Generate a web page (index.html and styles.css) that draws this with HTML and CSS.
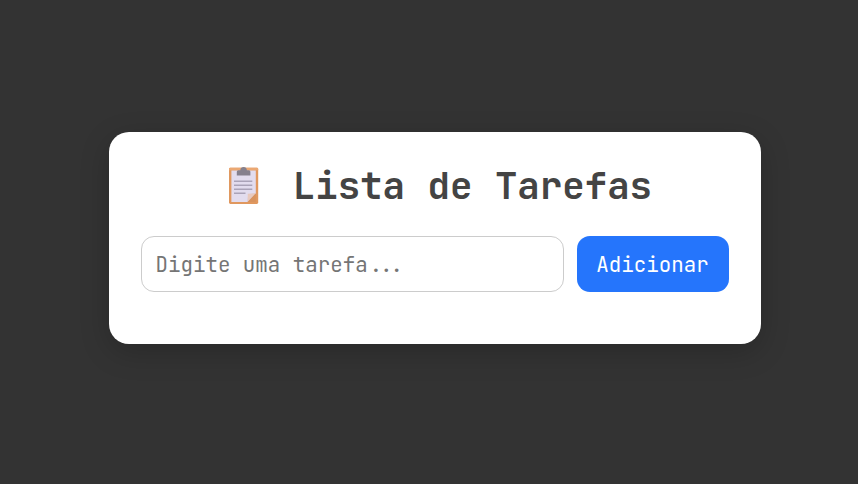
FILE: index.html
```html
<!DOCTYPE html>
<html lang="pt-BR">
<head>
<meta charset="UTF-8">
<title>Lista de Tarefas</title>
<link rel="stylesheet" href="styles.css">
</head>
<body>
<main class="card">
  <h1 class="title">
    <svg class="clipboard" viewBox="0 0 30 38" aria-hidden="true">
      <rect x="0" y="1.7" width="29.2" height="36.2" rx="1.4" fill="#e0985f"/>
      <path d="M1.2 1.7H28q1.2 0 1.2 1.2v1.3H0V2.9q0-1.2 1.2-1.2z" fill="#eba873"/>
      <path d="M2.4 4.6h24.4v22.6L18.6 36H2.4z" fill="#e2dcee"/>
      <path d="M18.6 36l.6-7.7 7.6-1.1z" fill="#cdbfd0"/>
      <path d="M18.6 36l.2-8.2 8-.6z" fill="#e8c9bd"/>
      <path d="M26.8 27.2V36h-8.2z" fill="#d8935e"/>
      <path d="M7.8 9.5V5.8q0-1.5 1.5-1.5h2Q11.7 1 14.6 1t3.3 3.3h2q1.5 0 1.5 1.5v3.7z" fill="#85808d"/>
      <path d="M5 15.2h18.3M5 19.2h18.3M5 23.2h18.3M5 27.2h11.5" stroke="#aaa3b8" stroke-width="1.4"/>
    </svg>
    <span>Lista de Tarefas</span>
  </h1>
  <form class="row">
    <input class="field" type="text" placeholder="Digite uma tarefa...">
    <button class="add" type="button">Adicionar</button>
  </form>
</main>
</body>
</html>
```
FILE: styles.css
```css
* { box-sizing: border-box; margin: 0; }
body {
  height: 484px;
  padding: 132px 97px 0 109px;
  overflow: hidden;
  background: #333;
  font-family: "JetBrains Mono", "DejaVu Sans Mono", monospace;
}
.card {
  height: 212px;
  padding: 32px;
  border-radius: 20px;
  background: #fff;
  box-shadow: 0 8px 30px rgba(0, 0, 0, .2);
}
.title {
  display: flex;
  height: 49px;
  margin-bottom: 23px;
  padding-left: 88px;
  color: #444;
  font-size: 37.44px;
  font-weight: 700;
  line-height: 44px;
  white-space: nowrap;
}
.clipboard {
  width: 30px;
  height: 38px;
  margin: 2px 33.8px 0 0;
}
.row { display: flex; gap: 13px; height: 56px; }
.field, .add {
  border-radius: 13px;
  font-family: inherit;
  font-size: 20.8px;
}
.field {
  flex: 1;
  min-width: 0;
  padding: 0 13.5px;
  border: 1px solid #ccc;
  background: #fff;
}
.field::placeholder { color: #757575; }
.add {
  width: 152px;
  padding: 0 1px 0 0;
  border: 0;
  background: #2575fc;
  color: #fff;
}
```
